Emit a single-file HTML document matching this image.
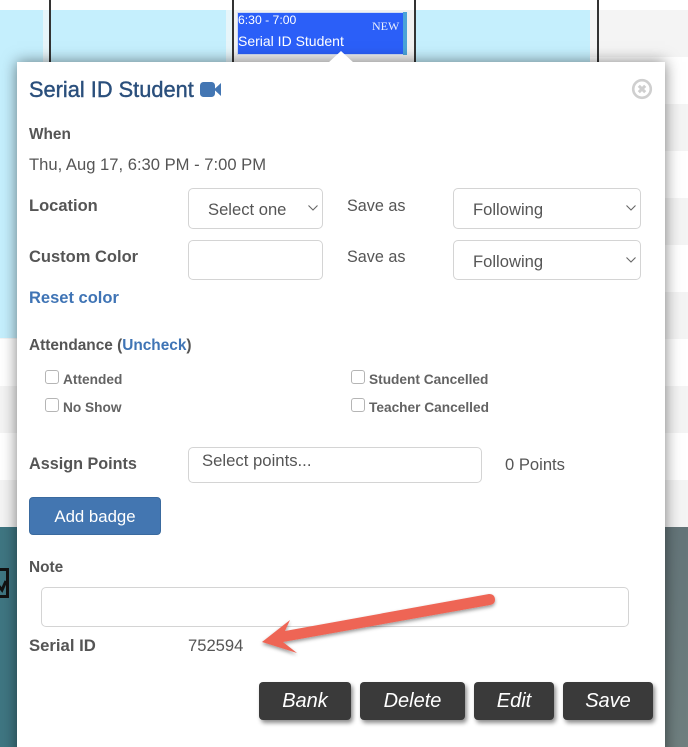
<!DOCTYPE html>
<html><head><meta charset="utf-8">
<style>
html,body{margin:0;padding:0;width:688px;height:747px;overflow:hidden;background:#fff}
body{position:relative;font-family:"Liberation Sans",sans-serif;color:#555}
.a{position:absolute;white-space:nowrap}
.b{font-weight:bold;font-size:16.5px;color:#555}
.t{font-size:16.6px;color:#555}
.box{position:absolute;box-sizing:border-box;border:1.5px solid #d4d4d4;border-radius:5px;background:#fff}
.cb{position:absolute;box-sizing:border-box;width:14px;height:14px;border:1px solid #b5b5b5;border-radius:3px;background:#fff}
.cl{font-size:13.7px;font-weight:bold;color:#636363}
.btn{position:absolute;top:682px;height:38px;line-height:38px;background:#3a3a3a;border-radius:4px;color:#fff;font-style:italic;font-size:20px;text-align:center;box-shadow:2px 3px 4px rgba(0,0,0,.45)}
.ln{position:absolute;top:0;width:1.5px;background:#333;height:62px}
.st{position:absolute;left:0;width:688px;height:47px;background:#f4f4f4}
</style></head>
<body>
<div class="st" style="top:10px"></div>
<div class="st" style="top:104px"></div>
<div class="st" style="top:198px"></div>
<div class="st" style="top:292px"></div>
<div class="st" style="top:386px"></div>
<div class="st" style="top:480px"></div>
<div class="a" style="left:0;top:10px;width:590px;height:328px;background:#c5effd"></div>
<div class="a" style="left:43px;top:10px;width:6px;height:328px;background:#e6f5fa"></div>
<div class="a" style="left:226px;top:10px;width:6px;height:328px;background:#e6f5fa"></div>
<div class="a" style="left:232px;top:10px;width:182px;height:328px;background:#f1f1f1"></div>
<div class="a" style="left:0;top:527px;width:17px;height:220px;background:#3f7682"></div>
<div class="a" style="left:665px;top:527px;width:23px;height:220px;background:linear-gradient(#647579,#6f7f7f)"></div>
<div class="ln" style="left:49px"></div>
<div class="ln" style="left:232px"></div>
<div class="ln" style="left:414px"></div>
<div class="ln" style="left:597px"></div>

<div class="a" style="left:237px;top:12px;width:170px;height:43px;background:#2b5ff8;border:1px solid #d0dcf5;border-right:0;box-sizing:border-box"></div>
<div class="a" style="left:403px;top:12px;width:4px;height:43px;background:#4aa3d8"></div>
<div class="a" style="left:238px;top:13px;font-size:12.2px;line-height:14px;color:#fff">6:30 - 7:00</div>
<div class="a" style="left:372px;top:19px;font-family:'Liberation Serif',serif;font-size:12px;line-height:14px;color:#e8eefc">NEW</div>
<div class="a" style="left:238px;top:33px;font-size:14px;line-height:16px;color:#fff">Serial ID Student</div>

<div class="a" style="left:17px;top:62px;width:648px;height:700px;background:#fff;box-shadow:0 0 14px rgba(0,0,0,.5)"></div>
<svg class="a" style="left:326px;top:51px" width="30" height="13"><path d="M2 12 L15 0 L28 12Z" fill="#fff"/></svg>

<div class="a" style="left:29px;top:76px;font-size:21.8px;line-height:27px;color:#2a4f7c;-webkit-text-stroke:.4px #2a4f7c">Serial ID Student</div>
<svg class="a" style="left:199px;top:81px" width="23" height="17" viewBox="0 0 23 17"><rect x="1" y="1" width="15" height="15" rx="3.5" fill="#4376b3"/><path d="M15 8.5 L22 2 V15Z" fill="#4376b3"/></svg>
<svg class="a" style="left:631px;top:78px" width="22" height="22" viewBox="0 0 22 22"><circle cx="11" cy="11" r="8.8" fill="none" stroke="#cfcfcf" stroke-width="2.6"/><path d="M7.8 7.8L14.2 14.2M14.2 7.8L7.800 14.2" stroke="#cfcfcf" stroke-width="3"/></svg>

<div class="a b" style="left:29px;top:126px;font-size:15.4px;line-height:18px">When</div>
<div class="a t" style="left:29px;top:155px;line-height:19px">Thu, Aug 17, 6:30 PM - 7:00 PM</div>

<div class="a b" style="left:29px;top:197px;line-height:19px">Location</div>
<div class="box" style="left:188px;top:188px;width:135px;height:41px"></div>
<div class="a t" style="left:208px;top:200px;line-height:19px">Select one</div>
<svg class="a" style="left:307px;top:204px" width="12" height="8"><path d="M1.500 1.500L6 6L10.500 1.500" fill="none" stroke="#666" stroke-width="1.1"/></svg>
<div class="a t" style="left:347px;top:197px;font-size:16.2px;line-height:19px">Save as</div>
<div class="box" style="left:453px;top:188px;width:188px;height:41px"></div>
<div class="a t" style="left:473px;top:200px;line-height:19px">Following</div>
<svg class="a" style="left:625px;top:204px" width="12" height="8"><path d="M1.500 1.500L6 6L10.500 1.500" fill="none" stroke="#666" stroke-width="1.1"/></svg>

<div class="a b" style="left:29px;top:248px;line-height:19px">Custom Color</div>
<div class="box" style="left:188px;top:240px;width:135px;height:40px"></div>
<div class="a t" style="left:347px;top:248px;font-size:16.2px;line-height:19px">Save as</div>
<div class="box" style="left:453px;top:240px;width:188px;height:40px"></div>
<div class="a t" style="left:473px;top:252px;line-height:19px">Following</div>
<svg class="a" style="left:625px;top:256px" width="12" height="8"><path d="M1.500 1.500L6 6L10.500 1.500" fill="none" stroke="#666" stroke-width="1.1"/></svg>

<div class="a b" style="left:29px;top:289px;line-height:19px;color:#3f74b5">Reset color</div>
<div class="a" style="left:29px;top:337px;font-size:15.4px;line-height:18px;font-weight:bold;color:#555">Attendance (<span style="color:#3f74b5">Uncheck</span>)</div>

<div class="cb" style="left:45px;top:370px"></div>
<div class="a cl" style="left:63px;top:372px;line-height:16px">Attended</div>
<div class="cb" style="left:45px;top:398px"></div>
<div class="a cl" style="left:63px;top:400px;line-height:16px">No Show</div>
<div class="cb" style="left:351px;top:370px"></div>
<div class="a cl" style="left:369px;top:372px;line-height:16px">Student Cancelled</div>
<div class="cb" style="left:351px;top:398px"></div>
<div class="a cl" style="left:369px;top:400px;line-height:16px">Teacher Cancelled</div>

<div class="a b" style="left:29px;top:455px;font-size:16.2px;line-height:19px">Assign Points</div>
<div class="box" style="left:188px;top:447px;width:294px;height:36px"></div>
<div class="a t" style="left:202px;top:451px;font-size:16.7px;line-height:19px">Select points...</div>
<div class="a t" style="left:505px;top:455px;line-height:19px">0 Points</div>

<div class="a" style="left:29px;top:497px;width:132px;height:38px;line-height:38px;box-sizing:border-box;background:#4376b1;border:1px solid #3a6a9f;border-radius:4px;color:#fff;font-size:16.8px;text-align:center">Add badge</div>

<div class="a b" style="left:29px;top:559px;font-size:15.4px;line-height:18px">Note</div>
<div class="box" style="left:41px;top:587px;width:588px;height:40px"></div>
<div class="a b" style="left:29px;top:636px;font-size:16.7px;line-height:19px">Serial ID</div>
<div class="a t" style="left:188px;top:636px;line-height:19px">752594</div>

<svg class="a" style="left:255px;top:588px" width="250" height="75" viewBox="255 588 250 75">
<defs><filter id="s" x="-10%" y="-30%" width="120%" height="170%"><feDropShadow dx="0" dy="2" stdDeviation="1.800" flood-color="#000" flood-opacity=".4"/></filter></defs>
<path filter="url(#s)" fill="#ee6555" d="M262 642 L290 620 L285 631 L489 594 Q495 594 495 600 Q495 604 490 605 L283 642 L297 653 Z"/>
</svg>

<div class="btn" style="left:259px;width:92px">Bank</div>
<div class="btn" style="left:360px;width:105px">Delete</div>
<div class="btn" style="left:474px;width:80px">Edit</div>
<div class="btn" style="left:563px;width:90px">Save</div>

<svg class="a" style="left:0;top:566px" width="10" height="34"><path d="M-4 3.500H7.500V30.500H-4M-2 19L2 24L6 15" fill="none" stroke="#111" stroke-width="3"/></svg>
</body></html>
